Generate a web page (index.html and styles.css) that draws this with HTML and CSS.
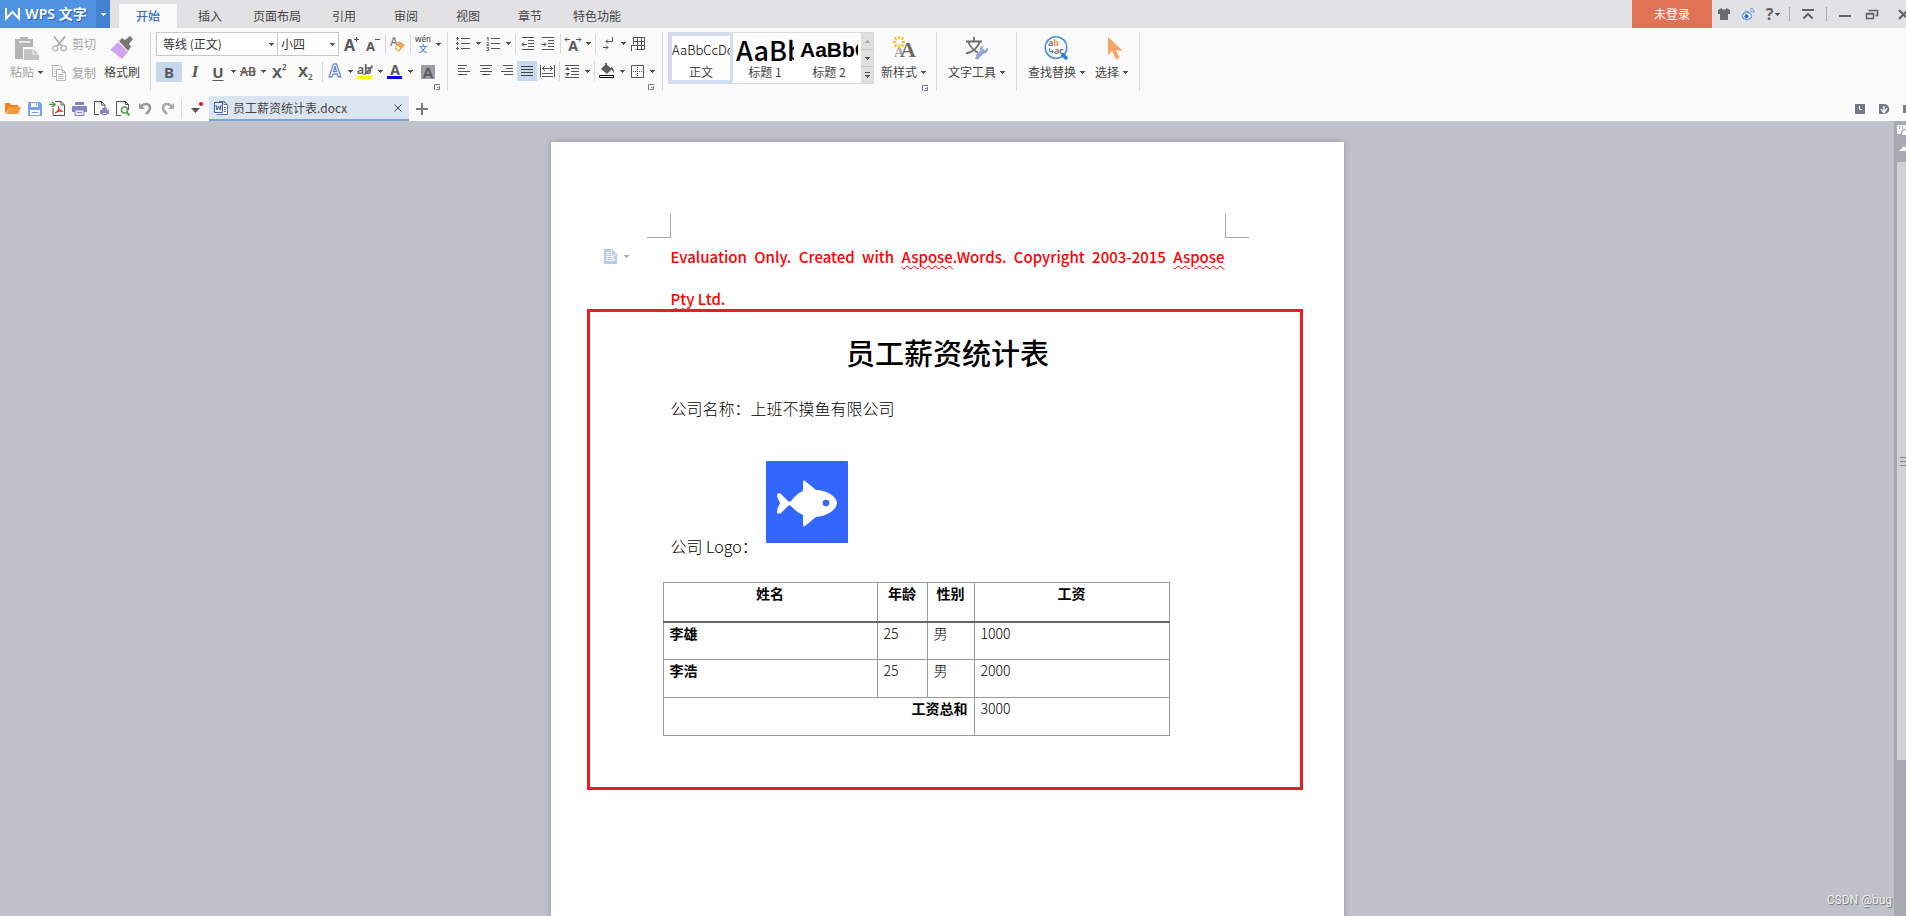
FILE: index.html
```html
<!DOCTYPE html>
<html lang="zh-CN">
<head>
<meta charset="utf-8">
<title>员工薪资统计表.docx - WPS 文字</title>
<link rel="stylesheet" href="styles.css">
</head>
<body>
<svg class="defs" aria-hidden="true">
  <symbol id="caret" viewBox="0 0 5 3"><path d="M0 0h5v1H4v1H3v1H2V2H1V1H0z" fill="currentColor"/></symbol>
  <symbol id="launch" viewBox="0 0 6 6"><path d="M.5 6V.5H6M2 5.5h3.500V2M3 3.500h1.500" fill="none" stroke="#6f7890"/></symbol>
</svg>

<header class="titlebar">
  <button class="brand"><svg width="15" height="12" viewBox="0 0 15 12"><path d="M1 0v10.500L7.500 4l6.500 6.500V0" fill="none" stroke="#fff" stroke-width="2"/></svg><span>WPS 文字</span></button>
  <button class="brand-menu" aria-label="菜单"><svg class="caret"><use href="#caret"/></svg></button>
  <nav class="menu">
    <button class="menu-tab active">开始</button>
    <button class="menu-tab">插入</button>
    <button class="menu-tab">页面布局</button>
    <button class="menu-tab">引用</button>
    <button class="menu-tab">审阅</button>
    <button class="menu-tab">视图</button>
    <button class="menu-tab">章节</button>
    <button class="menu-tab">特色功能</button>
  </nav>
  <button class="login">未登录</button>
  <div class="window-tools">
    <button class="w24" aria-label="皮肤"><svg width="12" height="12" viewBox="0 0 12 12"><path d="M3.500 0L0 2v4h2v6h8V6h2V2L8.500 0C8 2 4 2 3.500 0z" fill="#6b6b6d"/></svg></button>
    <button class="w24" aria-label="微博"><svg width="13" height="12" viewBox="0 0 13 12"><ellipse cx="5" cy="8" rx="4.500" ry="3.500" fill="#fff" stroke="#6f9be0" stroke-width="1.500"/><circle cx="4.500" cy="8.300" r="2" fill="#2f66c4"/><path d="M2 5C4 3 6 3 7 4.500M8 .800c3-.600 4.500 1.500 3.700 4M8.500 3c1.200-.200 1.800.500 1.500 1.700" fill="none" stroke="#7ea7e6" stroke-width="1.300"/></svg></button>
    <button class="w26 help" aria-label="帮助">?<svg class="caret"><use href="#caret"/></svg></button>
    <i class="bar"></i>
    <button class="w30" aria-label="隐藏功能区"><svg width="12" height="11" viewBox="0 0 12 11"><path d="M0 1h12M1.500 9.500L6 5l4.500 4.500" fill="none" stroke="#626264" stroke-width="2"/></svg></button>
    <i class="bar"></i>
    <button class="w30" aria-label="最小化"><svg width="12" height="12" viewBox="0 0 12 12"><path d="M0 8h12" stroke="#626264" stroke-width="2"/></svg></button>
    <button class="w24" aria-label="还原"><svg width="12" height="11" viewBox="0 0 12 11"><path d="M.500 4.500h7v5h-7zM.500 5h7M3.500 2.500v-1h8v5h-2" fill="none" stroke="#626264" stroke-width="1.500"/></svg></button>
    <button class="close" aria-label="关闭"><svg width="11" height="11" viewBox="0 0 11 11"><path d="M1 1l9 9M10 1l-9 9" stroke="#626264" stroke-width="2.200"/></svg></button>
  </div>
</header>

<section class="ribbon">
  <div class="group clipboard">
    <button class="big muted"><span class="pic"><svg width="24" height="23" viewBox="0 0 24 23"><path d="M0 2h5V0h8v2h5v8H8v12H0z" fill="#b4b4b4"/><path d="M4 5h11" stroke="#fafafa" stroke-width="1.500"/><path d="M9 12h9l6 5v6H9z" fill="#c2c2c2"/><path d="M18 12v5h6" fill="none" stroke="#fafafa"/></svg></span><span class="cap">粘贴<svg class="caret"><use href="#caret"/></svg></span></button>
    <div class="stack">
      <button class="mini muted"><svg width="15" height="16" viewBox="0 0 15 16"><path d="M2 .500l8 10M13 .500l-8 10" stroke="#aaa" stroke-width="1.800"/><circle cx="3.300" cy="12.300" r="2.600" fill="none" stroke="#b4b4b4" stroke-width="1.300"/><circle cx="11.700" cy="12.300" r="2.600" fill="none" stroke="#b4b4b4" stroke-width="1.300"/></svg>剪切</button>
      <button class="mini muted"><svg width="15" height="16" viewBox="0 0 15 16"><path d="M4 11.500H.500V.500h7L10 3M4.500 4.500h6l3 3v8h-9zM10.500 4.500v3h3M6.500 9.500h5M6.500 11.500h5M6.500 13.500h5M2.500 4.500h1M2.500 6.500h1M2.500 8.500h1" fill="none" stroke="#b4b4b4"/></svg>复制</button>
    </div>
    <button class="big painter"><span class="pic"><svg width="24" height="24" viewBox="0 0 24 24"><path d="M9 5l3-3 3 2 5-4 3 3-4 5 2 3-3 4z" fill="#777"/><path d="M8 6l10 10-6 7c-2-1-4-3-5-4-2-2-5-4-7-5z" fill="#cfa4f2"/></svg></span><span class="cap">格式刷</span></button>
  </div>

  <div class="group font">
    <div class="row">
      <label class="combo family"><select aria-label="字体"><option>等线 (正文)</option></select><svg class="caret"><use href="#caret"/></svg></label>
      <label class="combo size"><select aria-label="字号"><option>小四</option></select><svg class="caret"><use href="#caret"/></svg></label>
      <button class="tool w22" aria-label="增大字号"><svg width="16" height="16" viewBox="0 0 16 16"><text x="0" y="15" class="t-grow">A</text><path d="M10 3.500h5M12.500 1v5" stroke="#555"/></svg></button>
      <button class="tool" aria-label="减小字号"><svg width="16" height="16" viewBox="0 0 16 16"><text x="1" y="15" class="t-shrink">A</text><path d="M10 3.500h5" stroke="#555"/></svg></button>
      <i class="sep"></i>
      <button class="tool" aria-label="清除格式"><svg width="16" height="16" viewBox="0 0 16 16"><text x="0" y="10" class="t-eraser">A</text><path d="M9 6l5 3-5 6-4-3z" fill="#fff" stroke="#f0a44c" stroke-width="1.200"/><path d="M9 6l5 3-3 3.500-4.500-3.500z" fill="#f0a44c"/></svg></button>
      <i class="sep"></i>
      <button class="tool" aria-label="拼音指南"><svg width="16" height="18" viewBox="0 0 16 18"><text x="8" y="7" class="t-wen">wén</text><text x="8" y="17" class="t-zi">文</text></svg></button>
      <button class="drop" aria-label="更多"><svg class="caret"><use href="#caret"/></svg></button>
    </div>
    <div class="row">
      <button class="tool w26 on glyph">B</button>
      <button class="tool w26 glyph italic">I</button>
      <button class="tool glyph under">U</button>
      <button class="drop" aria-label="下划线"><svg class="caret"><use href="#caret"/></svg></button>
      <button class="tool glyph strike">AB</button>
      <button class="drop" aria-label="删除线"><svg class="caret"><use href="#caret"/></svg></button>
      <button class="tool w24" aria-label="上标"><svg width="16" height="18" viewBox="0 0 16 18"><text x="0" y="15" class="t-x">X</text><text x="10" y="7" class="t-x2">2</text></svg></button>
      <button class="tool w28" aria-label="下标"><svg width="16" height="18" viewBox="0 0 16 18"><text x="0" y="14" class="t-x">X</text><text x="10" y="17" class="t-x2">2</text></svg></button>
      <i class="sep"></i>
      <button class="tool" aria-label="文字效果"><svg width="18" height="17" viewBox="0 0 18 17"><text x="9" y="14" class="t-effect">A</text></svg></button>
      <button class="drop" aria-label="更多文字效果"><svg class="caret"><use href="#caret"/></svg></button>
      <button class="tool" aria-label="突出显示"><svg width="16" height="16" viewBox="0 0 16 16"><text x="0" y="10" class="t-hl">ab</text><path d="M15 1l-7 8-2 2 3-.500L16 3z" fill="#666"/><path d="M0 12h15v3H0z" fill="#ff0"/></svg></button>
      <button class="drop" aria-label="突出显示颜色"><svg class="caret"><use href="#caret"/></svg></button>
      <button class="tool" aria-label="字体颜色"><svg width="16" height="16" viewBox="0 0 16 16"><text x="8" y="11" class="t-color">A</text><path d="M0 12h15v3H0z" fill="#00f"/></svg></button>
      <button class="drop" aria-label="字体颜色选择"><svg class="caret"><use href="#caret"/></svg></button>
      <button class="tool w26 glyph"><span class="shade">A</span></button>
    </div>
    <button class="launcher" aria-label="字体设置"><svg width="6" height="6"><use href="#launch"/></svg></button>
  </div>

  <div class="group para">
    <div class="row">
      <button class="tool" aria-label="项目符号"><svg width="14" height="14" viewBox="0 0 14 14"><path d="M0 1.500h3M1.500 0v3M0 6.500h3M1.500 5v3M0 11.500h3M1.500 10v3M5 1.500h9M5 6.500h9M5 11.500h9" stroke="#555"/></svg></button>
      <button class="drop" aria-label="更多"><svg class="caret"><use href="#caret"/></svg></button>
      <button class="tool" aria-label="编号"><svg width="14" height="16" viewBox="0 0 14 16"><path d="M5 2.500h9M5 7.500h9M5 12.500h9" stroke="#555"/><text class="t-num" x="0" y="5">1</text><text class="t-num" x="0" y="10">2</text><text class="t-num" x="0" y="15">3</text></svg></button>
      <button class="drop" aria-label="更多"><svg class="caret"><use href="#caret"/></svg></button>
      <i class="sep"></i>
      <button class="tool" aria-label="减少缩进"><svg width="14" height="14" viewBox="0 0 14 14"><path d="M1 .500h12M7 3.500h6M7 6.500h6M7 9.500h6M1 12.500h12M1 7.500h5M1 7.500l2-2M1 7.500l2 2" fill="none" stroke="#555"/></svg></button>
      <button class="tool" aria-label="增加缩进"><svg width="14" height="14" viewBox="0 0 14 14"><path d="M1 .500h12M7 3.500h6M7 6.500h6M7 9.500h6M1 12.500h12M0 7.500h5M5 7.500l-2-2M5 7.500l-2 2" fill="none" stroke="#555"/></svg></button>
      <i class="sep"></i>
      <button class="tool" aria-label="中文版式"><svg width="16" height="16" viewBox="0 0 16 16"><text x="8" y="15" class="t-color">A</text><path d="M0 3.500h5M0 3.500l2-2M0 3.500l2 2M11 3.500h5M16 3.500l-2-2M16 3.500l-2 2" fill="none" stroke="#555"/></svg></button>
      <button class="drop" aria-label="更多"><svg class="caret"><use href="#caret"/></svg></button>
      <i class="sep"></i>
      <button class="tool" aria-label="段落标记"><svg width="12" height="13" viewBox="0 0 12 13"><path d="M10.500 0v4.500H4M4 4.500l2-2M4 4.500l2 2M1 10.500h5M6 10.500l-2-2M6 10.500l-2 2" fill="none" stroke="#555"/></svg></button>
      <button class="drop" aria-label="更多"><svg class="caret"><use href="#caret"/></svg></button>
      <button class="tool" aria-label="表格"><svg width="14" height="14" viewBox="0 0 14 14"><path d="M2.500 .500h11v12h-9M2.500 .500v7M6.500 .500v12M10.500 .500v12M2.500 4.500h11M.500 14V8.500h13M.500 8.500h3" fill="none" stroke="#555"/></svg></button>
    </div>
    <div class="row">
      <button class="tool w22" aria-label="左对齐"><svg width="12" height="12" viewBox="0 0 12 12"><path d="M0 .500h9M0 3.500h7M0 6.500h12M0 9.500h9" stroke="#555"/></svg></button>
      <button class="tool w22" aria-label="居中"><svg width="12" height="12" viewBox="0 0 12 12"><path d="M0 .500h12M2 3.500h8M0 6.500h12M2 9.500h8" stroke="#555"/></svg></button>
      <button class="tool" aria-label="右对齐"><svg width="12" height="12" viewBox="0 0 12 12"><path d="M2 .500h10M5 3.500h7M0 6.500h12M3 9.500h9" stroke="#555"/></svg></button>
      <button class="tool on" aria-label="两端对齐"><svg width="12" height="12" viewBox="0 0 12 12"><path d="M0 1.500h12M0 4.500h12M0 7.500h12M0 10.500h12" stroke="#444"/></svg></button>
      <button class="tool" aria-label="分散对齐"><svg width="15" height="13" viewBox="0 0 15 13"><path d="M.500 0v12M14.500 0v12M2 3.500h11M5 1L2.500 3.500 5 6M10 1l2.500 2.500L10 6M2 8.500h11M2 11.500h11" fill="none" stroke="#555"/></svg></button>
      <i class="sep"></i>
      <button class="tool" aria-label="行距"><svg width="15" height="13" viewBox="0 0 15 13"><path d="M0 .500h14M6 3.500h8M6 6.500h8M6 9.500h8M0 12.500h14" stroke="#555"/><path d="M0 5l2.500-3L5 5zM0 8h5L2.500 11z" fill="#555"/></svg></button>
      <button class="drop" aria-label="更多"><svg class="caret"><use href="#caret"/></svg></button>
      <i class="sep"></i>
      <button class="tool" aria-label="底纹"><svg width="16" height="16" viewBox="0 0 16 16"><path d="M7 1l6 5-5 5-6-5zM12 4c2 0 3 2 3 7-1-3-2-4-3-5zM6 0h2v4H6z" fill="#5c5c5c"/><path d="M.500 12.500h14v2H.500z" fill="#fff" stroke="#000"/></svg></button>
      <button class="drop" aria-label="更多"><svg class="caret"><use href="#caret"/></svg></button>
      <button class="tool" aria-label="边框"><svg width="13" height="13" viewBox="0 0 13 13"><path d="M.500 .500h12v12H.500z" fill="none" stroke="#555"/><path d="M6.500 2v9M2 6.500h9" stroke="#555" stroke-dasharray="1 1"/></svg></button>
      <button class="drop" aria-label="更多"><svg class="caret"><use href="#caret"/></svg></button>
    </div>
    <button class="launcher" aria-label="段落设置"><svg width="6" height="6"><use href="#launch"/></svg></button>
  </div>

  <div class="group styles">
    <div class="styles-main">
      <div class="gallery">
        <button class="style chosen"><span class="sample">AaBbCcDd</span><span>正文</span></button>
        <button class="style"><span class="sample h1">AaBb</span><span>标题 1</span></button>
        <button class="style"><span class="sample h2">AaBbC</span><span>标题 2</span></button>
        <div class="scroller">
          <button class="up" aria-label="上一行"><svg class="caret"><use href="#caret"/></svg></button>
          <button aria-label="下一行"><svg class="caret"><use href="#caret"/></svg></button>
          <button aria-label="展开"><svg width="5" height="7" viewBox="0 0 5 7"><path d="M0 .500h5" stroke="#555"/><path d="M0 3h5v1H4v1H3v1H2V5H1V4H0z" fill="#555"/></svg></button>
        </div>
      </div>
      <button class="big"><span class="pic"><svg width="24" height="24" viewBox="0 0 24 24"><text x="2" y="21" class="t-new1">A</text><text x="8" y="21" class="t-new2">A</text><path d="M7 0v3M7 9v3M1 6h3M10 6h3M2.500 1.500l2.300 2.300M9.200 8.200l2.300 2.300M11.500 1.500L9.200 3.800M4.800 8.200l-2.300 2.300" stroke="#fcc02c" stroke-width="2"/></svg></span><span class="cap">新样式<svg class="caret"><use href="#caret"/></svg></span></button>
    </div>
    <button class="launcher" aria-label="样式设置"><svg width="6" height="6"><use href="#launch"/></svg></button>
  </div>

  <div class="group plain">
    <button class="big"><span class="pic"><svg width="24" height="23" viewBox="0 0 24 23"><path d="M9 0v4M1 4.500h16M3 4.500C5 9 9 14 13 15.500M15 4.500C13 10 8 15 1 16.500" fill="none" stroke="#6b6b6b" stroke-width="1.800"/><path d="M12 20l7-7" stroke="#98a5d2" stroke-width="4"/><path d="M22.500 10.500a4 4 0 1 1-4-2l-1 3 2 2zM10 21a2.500 2.500 0 1 0 3-3.500z" fill="#98a5d2"/></svg></span><span class="cap">文字工具<svg class="caret"><use href="#caret"/></svg></span></button>
  </div>

  <div class="group plain">
    <button class="big"><span class="pic"><svg width="25" height="24" viewBox="0 0 25 24"><circle cx="12" cy="11.500" r="10.800" fill="#fdfdfd" stroke="#4a8fd8" stroke-width="1.500"/><path d="M18 18l5 5" stroke="#2f7dd6" stroke-width="3.500"/><text x="4" y="10" class="t-ab">a<tspan class="t-b">b</tspan></text><text x="10" y="18" class="t-ab">ac</text><path d="M5.500 12v3.500H9M7.500 13.500l2 2-2 2" fill="none" stroke="#2f7dd6"/></svg></span><span class="cap">查找替换<svg class="caret"><use href="#caret"/></svg></span></button>
    <button class="big"><span class="pic pointer"><svg width="15" height="23" viewBox="0 0 15 23"><path d="M0 0v18l4-4 4 8.500 3.500-2L8 13.500h6.500z" fill="#f2a568"/></svg></span><span class="cap">选择<svg class="caret"><use href="#caret"/></svg></span></button>
  </div>
</section>

<div class="docbar">
  <div class="quick">
    <button aria-label="打开"><svg width="16" height="13" viewBox="0 0 16 13"><path d="M0 12V1h5l1 2h7v2H5z" fill="#f4821f"/><path d="M1 12l4-7h11l-3 7z" fill="#fa9a3c"/></svg></button>
    <button aria-label="保存"><svg width="14" height="14" viewBox="0 0 14 14"><path d="M0 0h12l2 2v12H0z" fill="#7aa3ea"/><path d="M3 1h7v4H3zM2 8h10v5H2z" fill="#fff"/><path d="M8 1h1v3H8zM4 10h6v1H4z" fill="#7aa3ea"/></svg></button>
    <button aria-label="输出为PDF"><svg width="16" height="15" viewBox="0 0 16 15"><path d="M4 7v7.500h11.500V4L12 .500H6M12 .500V4h3.500" fill="none" stroke="#555"/><path d="M0 3.500h5M3 1l3 2.500L3 6" fill="none" stroke="#4d9b3c" stroke-width="1.500"/><path d="M6 12c3-1 4-4 3.500-7C9 8 11 10 14 10.500c-3-.800-6 0-8 1.500" fill="none" stroke="#e03a2f" stroke-width="1.200"/></svg></button>
    <button aria-label="打印"><svg width="15" height="14" viewBox="0 0 15 14"><path d="M3 0h9v3H3zM0 4h15v6H0z" fill="#8585c6"/><path d="M3 8h9v5.500H3z" fill="#e8e8f6" stroke="#8585c6"/><path d="M5 10.500h5" stroke="#8585c6"/></svg></button>
    <button aria-label="打印预览"><svg width="15" height="15" viewBox="0 0 15 15"><path d="M5 13.500H.500V.500h7L11 4v3M7.500 .500V4H11" fill="none" stroke="#555"/><path d="M6 9h9v4H6zM8 7h5v7H8z" fill="#8585c6"/><path d="M9 12h3v1H9z" fill="#fff"/></svg></button>
    <button aria-label="查找"><svg width="14" height="15" viewBox="0 0 14 15"><path d="M5 14.500H.500V.500h9l3 3V9M9.500 .500v3h3" fill="none" stroke="#555"/><circle cx="8.500" cy="9" r="3" fill="none" stroke="#5aa04c" stroke-width="1.500"/><path d="M10.500 11l3 3.500" stroke="#5aa04c" stroke-width="2"/></svg></button>
    <button aria-label="撤销"><svg width="13" height="13" viewBox="0 0 13 13"><path d="M2 4.500C6 0 11 2 11 6c0 2.500-2 4.500-4 6" fill="none" stroke="#999" stroke-width="2.500"/><path d="M0 1v6h6z" fill="#999"/></svg></button>
    <button aria-label="恢复"><svg width="13" height="13" viewBox="0 0 13 13"><path d="M11 4.500C7 0 2 2 2 6c0 2.500 2 4.500 4 6" fill="none" stroke="#aaa" stroke-width="2.500"/><path d="M13 1v6H7z" fill="#aaa"/></svg></button>
  </div>
  <button class="customize" aria-label="自定义"><svg width="12" height="14" viewBox="0 0 12 14"><path d="M0 6h9L4.500 11z" fill="#555"/><circle cx="10" cy="2" r="2" fill="#f01010"/></svg></button>
  <div class="doc-tab">
    <svg width="14" height="14" viewBox="0 0 14 14"><path d="M5 .500h5l3.500 3v10H3" fill="#fff" stroke="#5a6ea8"/><path d="M10 .500v3h3.500M10 6.500h2M10 8.500h2M10 10.500h2" fill="none" stroke="#5a6ea8"/><path d="M.500 1.500h8v10h-8z" fill="#e9effa" stroke="#3c5fae"/><path d="M2 4l1 5 1.500-4L6 9l1-5" fill="none" stroke="#3c5fae"/></svg>
    <span class="doc-name">员工薪资统计表.docx</span>
    <button aria-label="关闭文档"><svg width="8" height="8" viewBox="0 0 8 8"><path d="M.500 .500l7 7M7.500 .500l-7 7" stroke="#444"/></svg></button>
  </div>
  <button class="add" aria-label="新建"><svg width="12" height="12" viewBox="0 0 12 12"><path d="M6 0v12M0 6h12" stroke="#7b7b7b" stroke-width="2"/></svg></button>
  <div class="side-tools">
    <button aria-label="历史"><svg width="10" height="10" viewBox="0 0 10 10"><path d="M0 0h10v10H0z" fill="#737788"/><path d="M4.500 2v3.500H7" fill="none" stroke="#fff"/></svg></button>
    <button aria-label="文档助手"><svg width="10" height="10" viewBox="0 0 10 10"><path d="M0 0h5c7 0 7 10 0 10H0z" fill="#737788"/><path d="M5 9V2M5 9L2 5M5 9l3-5" stroke="#fff" stroke-width="1.300"/></svg></button>
    <button aria-label="更多"><svg width="10" height="8" viewBox="0 0 10 8"><path d="M0 0h10v8H0z" fill="#7d7d80"/></svg></button>
  </div>
</div>

<main class="workspace">
  <div class="canvas">
    <article class="page">
      <div class="crops"><i class="crop left"></i><i class="crop right"></i></div>
      <button class="para-opt" aria-label="段落选项"><svg width="13" height="15" viewBox="0 0 13 15"><path d="M0 0h8l5 5v10H0z" fill="#b7cbe8"/><path d="M7.500 1v5H12M2 3.500h4M2 5.500h4M2 7.500h8M2.500 9.500h8v2h-8zM6.500 11v2" fill="none" stroke="#fff"/></svg><svg class="caret"><use href="#caret"/></svg></button>
      <p class="notice first">Evaluation Only. Created with <u>Aspose</u>.Words. Copyright 2003-2015 <u>Aspose</u></p>
      <p class="notice"><u>Pty</u> Ltd.</p>
      <h1>员工薪资统计表</h1>
      <p class="line">公司名称：上班不摸鱼有限公司</p>
      <div class="logo-line"><span>公司 Logo：</span><svg class="fish" width="82" height="82" viewBox="0 0 82 82"><rect width="82" height="82" rx="1" fill="#36f"/><path d="M11 34c1-3 4-2 6 1l5 5c1 1 2 1 3 0 3-4 7-8 12-10V21c0-1 1-2 2-1l11 9c11 0 21 7 21 13s-9 13-21 14l-11 9c-1 1-2 0-2-1V54c-5-2-9-6-12-9-1-1-2-1-3 0l-7 7c-2 1-4 1-4-1 0-4 2-6 3-9-1-3-3-5-3-8z" fill="#fff"/><circle cx="60" cy="42" r="3.300" fill="#36f"/></svg></div>
      <table class="pay">
        <colgroup><col class="c-name"><col class="c-age"><col class="c-sex"><col class="c-pay"></colgroup>
        <thead><tr><th>姓名</th><th>年龄</th><th>性别</th><th>工资</th></tr></thead>
        <tbody>
          <tr><th>李雄</th><td>25</td><td>男</td><td>1000</td></tr>
          <tr><th>李浩</th><td>25</td><td>男</td><td>2000</td></tr>
          <tr><th colspan="3" class="total">工资总和</th><td>3000</td></tr>
        </tbody>
      </table>
      <div class="mark"></div>
    </article>
    <span class="watermark">CSDN @bug</span>
  </div>
  <aside class="scrollbar">
    <svg width="9" height="10" viewBox="0 0 9 10"><path d="M0 0h9v9H0z" fill="#f4f4f6"/><path d="M2.500 1v3M5.500 1v3" stroke="#a9aab2"/><path d="M4 10V7l2-3h3v6z" fill="#a9aab2"/><path d="M5 10V8l2-3h2v5z" fill="#f4f4f6"/></svg>
    <svg width="9" height="5" viewBox="0 0 9 5"><path d="M2 5l5-5 2 2v3z" fill="#fff"/></svg>
    <div class="thumb"><i></i><i></i><i></i></div>
  </aside>
</main>
</body>
</html>
```
FILE: styles.css
```css
* { box-sizing: border-box; }

body {
  margin: 0;
  height: 100vh;
  display: flex;
  flex-direction: column;
  overflow: hidden;
  background: #fafafa;
  color: #444;
  font: 12px/16px "Noto Sans CJK SC", sans-serif;
}

button {
  display: flex;
  align-items: center;
  justify-content: center;
  flex: none;
  margin: 0;
  padding: 0;
  border: 0;
  background: none;
  color: inherit;
  font: inherit;
  white-space: nowrap;
}

svg { flex: none; display: block; overflow: visible; }
p, h1 { margin: 0; }
.defs { position: absolute; width: 0; height: 0; }
.caret { width: 5px; height: 3px; color: #555; }

.w22 { width: 22px; }
.w24 { width: 24px; }
.w26 { width: 26px; }
.w28 { width: 28px; }
.w30 { width: 30px; }

/* Title bar */
.titlebar {
  display: flex;
  flex: none;
  height: 28px;
  background: #e2e2e4;
}
.brand {
  width: 96px;
  padding-right: 4px;
  gap: 5px;
  background: #4f92e2;
  color: #fff;
  font: 600 14px/20px "Noto Sans", "Noto Sans CJK SC", sans-serif;
  text-shadow: 1px 1px 1px #2b62ab;
}
.brand-menu { width: 14px; background: #4382d0; }
.brand-menu .caret { color: #fff; }
.menu { display: flex; flex: 1; padding: 4px 7px 0; }
.menu-tab {
  min-width: 58px;
  margin: 0 2px;
  padding: 0 10px;
}
.menu-tab.active {
  background: #fafafa;
  color: #3a6fc0;
  font-weight: 500;
}
.login { width: 80px; background: #e07255; color: #fff; }
.window-tools {
  display: flex;
  align-items: center;
  width: 194px;
  overflow: hidden;
}
.help { gap: 2px; color: #626264; font: 700 16px/20px "Noto Sans", sans-serif; }
.bar { flex: none; width: 1px; height: 14px; margin: 0 3px; background: #a9a9ab; }
.close { width: 38px; }

/* Ribbon */
.ribbon { display: flex; flex: none; height: 68px; padding-top: 4px; }
.group {
  display: flex;
  flex-direction: column;
  height: 59px;
  padding: 0 5px;
  border-right: 1px solid #d9d9db;
}
.group.clipboard, .group.plain { flex-direction: row; }
.group.clipboard { width: 151px; }
.group.font { padding-right: 4px; }
.row { display: flex; align-items: center; height: 24px; }
.row + .row { margin-top: 4px; }
.tool { width: 20px; height: 20px; }
.tool.w22 { width: 22px; }
.tool.w24 { width: 24px; }
.tool.w26 { width: 26px; }
.tool.w28 { width: 28px; }
.tool.on { background: #c8d9ef; }
.drop { width: 10px; height: 20px; }
.sep { flex: none; width: 1px; height: 20px; margin: 0 2px; background: #d9d9db; }
.launcher { align-self: flex-end; width: 8px; height: 8px; margin-right: 2px; }

.big { flex-direction: column; justify-content: flex-start; padding: 0 5px; }
.pic { display: flex; align-items: center; justify-content: center; height: 32px; }
.pointer { padding-left: 8px; }
.cap { display: flex; align-items: center; gap: 4px; }
.muted { color: #a3a3a3; }
.stack { display: flex; flex-direction: column; gap: 12px; padding: 3px 4px 0; }
.mini { gap: 5px; height: 17px; }
.painter { padding: 0 4px; }

.combo {
  display: flex;
  align-items: center;
  height: 24px;
  padding: 0 3px;
  border: 1px solid #c8c8ca;
  background: #fff;
}
.combo select {
  flex: 1;
  min-width: 0;
  padding: 0;
  border: 0;
  background: none;
  color: #333;
  font: inherit;
  appearance: none;
}
.family { width: 122px; padding-left: 6px; }
.size { width: 62px; margin: 0 2px 0 -1px; }

.glyph { color: #5a5a5a; font: 700 15px/20px "Noto Sans", sans-serif; }
.italic { font: italic 700 17px/20px "Liberation Serif", serif; }
.under { text-decoration: underline; text-underline-offset: 2px; }
.strike { font-size: 12px; font-weight: 600; text-decoration: line-through #e33; }
.shade { width: 14px; height: 14px; background: #9c9fa6; line-height: 14px; }

.t-grow { font: 700 16px "Noto Sans", sans-serif; fill: #5a5a5a; }
.t-shrink { font: 700 13px "Noto Sans", sans-serif; fill: #5a5a5a; }
.t-eraser { font: 500 12px "Noto Sans", sans-serif; fill: #777; }
.t-wen { font: 500 8px "Noto Sans", sans-serif; fill: #555; text-anchor: middle; }
.t-zi { font: 500 9px "Noto Sans CJK SC", sans-serif; fill: #5585d6; text-anchor: middle; }
.t-x { font: 700 15px "Noto Sans", sans-serif; fill: #5a5a5a; }
.t-x2 { font: 600 8px "Noto Sans", sans-serif; fill: #5a5a5a; }
.t-effect {
  font: 700 17px "Noto Sans", sans-serif;
  fill: #fff;
  stroke: #4a74c9;
  stroke-width: 1px;
  text-anchor: middle;
}
.t-hl { font: 600 12px "Noto Sans", sans-serif; fill: #5a5a5a; }
.t-color { font: 700 14px "Noto Sans", sans-serif; fill: #5a5a5a; text-anchor: middle; }
.t-num { font: 700 6px "Noto Sans", sans-serif; fill: #555; }
.t-new1 { font: 700 14px "Liberation Serif", serif; fill: #aaa; }
.t-new2 { font: 700 22px "Liberation Serif", serif; fill: #6b6b6b; }
.t-ab { font: 600 9px "Noto Sans", sans-serif; fill: #666; }
.t-b { fill: #e8873a; }

.styles-main { display: flex; height: 52px; gap: 2px; }
.gallery {
  display: flex;
  border: 1px solid #d9d9db;
  background: #fff;
}
.style {
  flex-direction: column;
  justify-content: flex-start;
  align-items: center;
  width: 64px;
  padding: 3px;
  overflow: hidden;
}
.style.chosen { padding: 0; border: 3px solid #cfddf5; }
.sample {
  width: 100%;
  height: 28px;
  overflow: hidden;
  color: #000;
  font: 300 13px/28px "Noto Sans CJK SC", sans-serif;
  text-align: left;
}
.sample.h1 { font: 500 27px/28px "Noto Sans CJK SC", sans-serif; }
.sample.h2 { font: 700 21px/28px "Liberation Sans", sans-serif; }
.scroller { display: flex; flex-direction: column; gap: 1px; width: 12px; background: #c6c6c8; }
.scroller button { flex: 1; background: #dfdfe0; }
.up .caret { transform: rotate(180deg); color: #aaa; }
.group.plain { padding: 0 6px; }

/* Document tab bar */
.docbar { display: flex; flex: none; height: 25px; }
.quick { display: flex; padding: 0 3px 0 2px; }
.quick button { width: 22px; }
.customize { width: 28px; padding-left: 4px; background: linear-gradient(#d9d9db, #d9d9db) 0 3px / 1px 20px no-repeat; }
.doc-tab {
  display: flex;
  align-items: center;
  width: 200px;
  padding: 0 7px 0 5px;
  gap: 5px;
  border-bottom: 2px solid #7ba3d8;
  background: #dbe5f1;
}
.doc-name { flex: 1; }
.add { width: 26px; }
.side-tools { display: flex; margin-left: auto; width: 53px; gap: 14px; overflow: hidden; padding-left: 2px; }

/* Workspace */
.workspace { display: flex; flex: 1; min-height: 0; }
.canvas {
  position: relative;
  flex: 1;
  padding-top: 21px;
  overflow: hidden;
  background: #bfc2cb;
}
.page {
  position: relative;
  width: 793px;
  min-height: 1122px;
  margin: 0 auto;
  padding: 72px 119px 72px 120px;
  background: #fff;
  box-shadow: 0 0 6px #8f929c;
  color: #000;
  font: 300 16px/42px "Noto Sans CJK SC", sans-serif;
}
.crops { display: flex; justify-content: space-between; margin: 0 -24px -2px; }
.crop { width: 24px; height: 24px; border: 0 solid #aaa; border-bottom-width: 1px; }
.crop.left { border-right-width: 1px; }
.crop.right { border-left-width: 1px; }
.para-opt { position: absolute; left: 53px; top: 107px; gap: 7px; }
.para-opt .caret { color: #aaa; }
.notice { color: #f00; font-size: 15px; font-weight: 500; }
.notice.first { text-align-last: justify; white-space: nowrap; }
.notice u { text-decoration: underline wavy #e00 1px; text-underline-offset: 2px; }
h1 { margin: 2px 0 4px; font: 500 29px/60px "Noto Sans CJK SC", sans-serif; text-align: center; }
.line { line-height: 44px; }
.logo-line {
  display: flex;
  align-items: flex-end;
  gap: 8px;
  height: 152px;
  line-height: 72px;
}
.fish { margin-bottom: 39px; }
.pay {
  width: 507px;
  margin-left: -8px;
  border-collapse: collapse;
  table-layout: fixed;
  font-size: 14px;
  line-height: 20px;
}
.c-name { width: 214px; }
.c-age { width: 50px; }
.c-sex { width: 47px; }
.pay th, .pay td {
  height: 38px;
  padding: 0 6px;
  border: 1px solid #999;
  text-align: left;
  vertical-align: top;
}
.pay th { font-weight: 700; }
.pay thead th { height: 39px; padding: 0; border-bottom: 2px solid #666; text-align: center; }
.pay .total { text-align: right; }

/* Highlight frame over the document body */
.mark {
  position: absolute;
  left: 36px;
  right: 41px;
  top: 167px;
  height: 481px;
  border: 3px solid #ed1c24;
}
.watermark {
  position: absolute;
  right: 2px;
  bottom: 8px;
  color: #f2f2f4;
  font: 12px/16px Roboto, sans-serif;
  text-shadow: 1px 1px 1px #666;
}
.scrollbar {
  display: flex;
  flex-direction: column;
  gap: 11px;
  width: 12px;
  padding: 4px 0 0 3px;
  background: #a9a9b2;
}
.thumb {
  display: flex;
  flex-direction: column;
  align-items: flex-end;
  justify-content: center;
  gap: 3px;
  height: 598px;
  background: #d0d1d5;
}
.thumb i { width: 6px; height: 1px; background: #85868c; }
```
